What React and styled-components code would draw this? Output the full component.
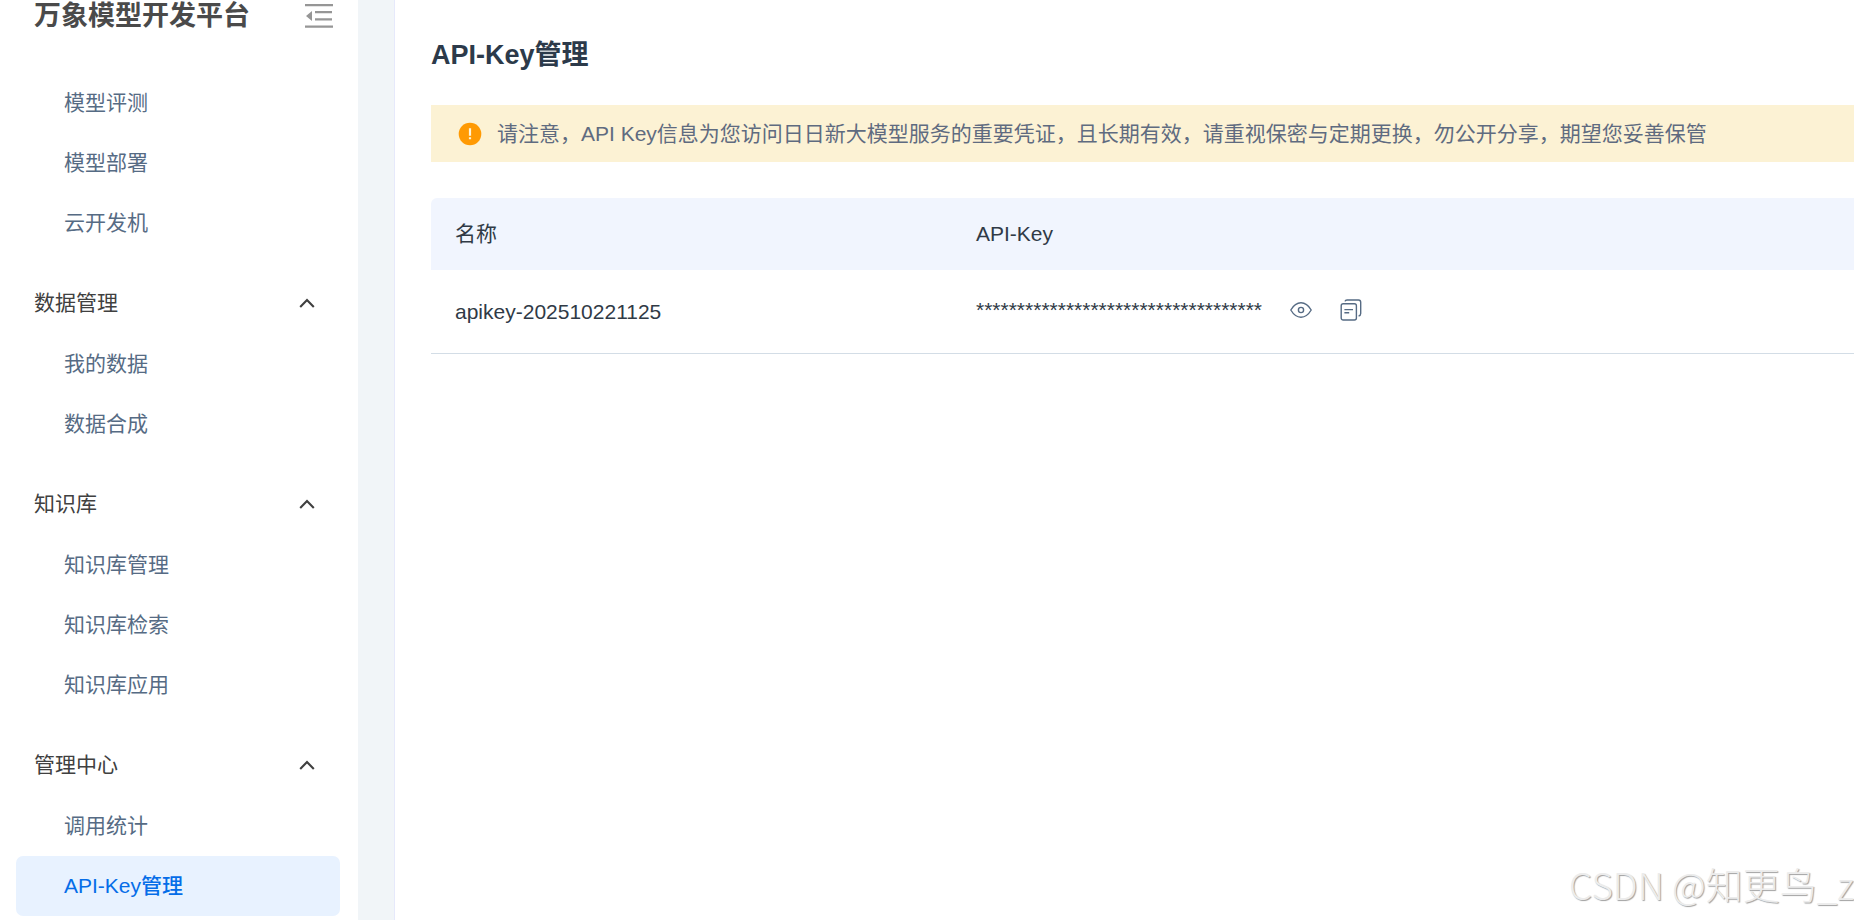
import { useState } from 'react'
import styled, { createGlobalStyle } from 'styled-components'

const GlobalStyle = createGlobalStyle`
    *,
    *::before,
    *::after {
        box-sizing: border-box;
    }

    body {
        margin: 0;
        background: #fff;
        font-family: 'Liberation Sans', 'Noto Sans CJK SC', sans-serif;
        font-size: 21px;
        line-height: 30px;
        color: #303a46;
    }

    h1, p, ul {
        margin: 0;
        padding: 0;
    }

    button {
        padding: 0;
        border: none;
        background: none;
        font: inherit;
        color: inherit;
        cursor: pointer;
    }
`

const Page = styled.div`
    position: relative;
    display: flex;
    height: 100vh;
    overflow: hidden;
`

const Sidebar = styled.aside`
    flex: 0 0 358px;
    padding-inline: 16px 18px;
    background: #fff;
`

const Brand = styled.div`
    display: flex;
    align-items: center;
    justify-content: space-between;
    height: 32px;
    margin-block-end: 41px;
    padding-inline: 18px 7px;
    font-size: 27px;
    font-weight: bold;
    color: #4a4a4a;
`

const CollapseButton = styled.button`
    display: flex;
    color: #969696;
`

const NavGroup = styled.section`
    margin-block-end: 20px;
`

const GroupToggle = styled.button`
    display: flex;
    align-items: center;
    justify-content: space-between;
    width: 100%;
    height: 61px;
    padding-inline: 18px 25px;
    padding-block-end: 2px;
    color: #404040;
`

const NavList = styled.ul`
    list-style: none;
`

const NavLink = styled.a`
    display: flex;
    align-items: center;
    height: 60px;
    padding-inline: 48px;
    border-radius: 7px;
    background: ${(props) => (props.$active ? '#e8f2ff' : 'transparent')};
    color: ${(props) => (props.$active ? '#056de8' : '#566b84')};
    font-weight: ${(props) => (props.$active ? 500 : 400)};
    text-decoration: none;
`

const Gutter = styled.div`
    flex: 0 0 37px;
    background: #f1f5f8;
    border-inline-end: 1px solid #e6e9fb;
`

const Main = styled.main`
    flex: 1;
    min-width: 0;
    padding-block-start: 37px;
    padding-inline-start: 36px;
`

const Title = styled.h1`
    font-size: 27px;
    line-height: 36px;
    font-weight: bold;
    color: #2c3a4a;
`

const Notice = styled.div`
    display: flex;
    align-items: center;
    gap: 15px;
    height: 57px;
    margin-block: 32px 36px;
    padding-inline: 27px;
    background: #fcf2d4;
    color: #5f6b80;
    white-space: nowrap;
`

const KeyTable = styled.table`
    width: 100%;
    table-layout: fixed;
    border-collapse: separate;
    border-spacing: 0;
    text-align: left;
    color: #303a46;
`

const HeadCell = styled.th`
    width: ${(props) => props.$width || 'auto'};
    height: 72px;
    padding: 0 24px;
    background: #f1f5fe;
    font-weight: normal;

    &:first-child {
        border-start-start-radius: 6px;
    }
`

const Cell = styled.td`
    height: 84px;
    padding: 0 24px;
    border-block-end: 1px solid #d3dde6;
`

const KeyValue = styled.div`
    display: flex;
    align-items: center;
    gap: 28px;
    padding-block-end: 4px;
`

const IconButton = styled.button`
    display: flex;
    color: #566b84;
`

const Watermark = styled.div`
    position: absolute;
    right: 0;
    bottom: 12px;
    font-family: 'Noto Sans CJK SC', sans-serif;
    font-size: 37px;
    line-height: 48px;
    font-weight: 300;
    color: #ececec;
    text-shadow: 1px 1px 1px #a0a0a0;
    pointer-events: none;
`

const CollapseIcon = () => (
    <svg width='28' height='24' viewBox='0 0 28 24' fill='currentColor'>
        <path d='M0 0h28v2.2H0zM10 7h17v2.2H10zM10 14.2h17v2.2H10zM0 21.4h28v2.4H0zM7 7v10L1 12z' />
    </svg>
)

const ChevronUp = () => (
    <svg width='16' height='10' viewBox='0 0 16 10' fill='none'>
        <path d='M1.2 9 8 2l6.8 7' stroke='#404040' strokeWidth='2.1' />
    </svg>
)

const WarningIcon = () => (
    <svg width='24' height='24' viewBox='0 0 24 24'>
        <circle cx='12' cy='12' r='11.3' fill='#ff9a03' />
        <path d='M12 6.3v7.4M12 15.2v2' stroke='#fff4d8' strokeWidth='2.2' />
    </svg>
)

const EyeIcon = () => (
    <svg
        width='22'
        height='22'
        viewBox='0 0 22 22'
        fill='none'
        stroke='currentColor'
        strokeWidth='1.4'
    >
        <path d='M.8 11C3.400 6.600 7 3.800 11 3.800S18.600 6.600 21.200 11C18.600 15.400 15 18.200 11 18.200S3.400 15.400 .8 11Z' />
        <circle cx='11' cy='11' r='2.6' />
    </svg>
)

const CopyIcon = () => (
    <svg
        width='22'
        height='22'
        viewBox='0 0 22 22'
        fill='none'
        stroke='currentColor'
        strokeWidth='1.4'
    >
        <rect x='1.200' y='4.800' width='15.200' height='16.200' rx='2' />
        <path d='M5 2.400Q5.400 1 7 1H18.500Q20.700 1 20.700 3.200V14.500Q20.700 16.600 18.600 17' />
        <path d='M4.400 10.600h8.600M4.400 13.800h4.800' />
    </svg>
)

const groups = [
    { items: ['模型评测', '模型部署', '云开发机'] },
    { title: '数据管理', items: ['我的数据', '数据合成'] },
    { title: '知识库', items: ['知识库管理', '知识库检索', '知识库应用'] },
    { title: '管理中心', items: ['调用统计', 'API-Key管理'] },
]

const Group = ({ title, items, active, onSelect }) => {
    const [open, setOpen] = useState(true)

    return (
        <NavGroup>
            {title && (
                <GroupToggle aria-expanded={open} onClick={() => setOpen(!open)}>
                    {title}
                    <ChevronUp />
                </GroupToggle>
            )}
            {open && (
                <NavList>
                    {items.map((item) => (
                        <li key={item}>
                            <NavLink
                                href='#'
                                $active={item === active}
                                onClick={() => onSelect(item)}
                            >
                                {item}
                            </NavLink>
                        </li>
                    ))}
                </NavList>
            )}
        </NavGroup>
    )
}

const App = () => {
    const [active, setActive] = useState('API-Key管理')

    return (
        <Page>
            <GlobalStyle />
            <Sidebar>
                <Brand>
                    万象模型开发平台
                    <CollapseButton aria-label='收起菜单'>
                        <CollapseIcon />
                    </CollapseButton>
                </Brand>
                <nav>
                    {groups.map((group) => (
                        <Group
                            key={group.items[0]}
                            title={group.title}
                            items={group.items}
                            active={active}
                            onSelect={setActive}
                        />
                    ))}
                </nav>
            </Sidebar>
            <Gutter />
            <Main>
                <Title>API-Key管理</Title>
                <Notice>
                    <WarningIcon />
                    <p>
                        请注意，API Key信息为您访问日日新大模型服务的重要凭证，且长期有效，请重视保密与定期更换，勿公开分享，期望您妥善保管
                    </p>
                </Notice>
                <KeyTable>
                    <thead>
                        <tr>
                            <HeadCell $width='521px'>名称</HeadCell>
                            <HeadCell>API-Key</HeadCell>
                        </tr>
                    </thead>
                    <tbody>
                        <tr>
                            <Cell>apikey-202510221125</Cell>
                            <Cell>
                                <KeyValue>
                                    <span>{'*'.repeat(35)}</span>
                                    <IconButton aria-label='查看'>
                                        <EyeIcon />
                                    </IconButton>
                                    <IconButton aria-label='复制'>
                                        <CopyIcon />
                                    </IconButton>
                                </KeyValue>
                            </Cell>
                        </tr>
                    </tbody>
                </KeyTable>
            </Main>
            <Watermark>CSDN @知更鸟_z</Watermark>
        </Page>
    )
}

export default App
